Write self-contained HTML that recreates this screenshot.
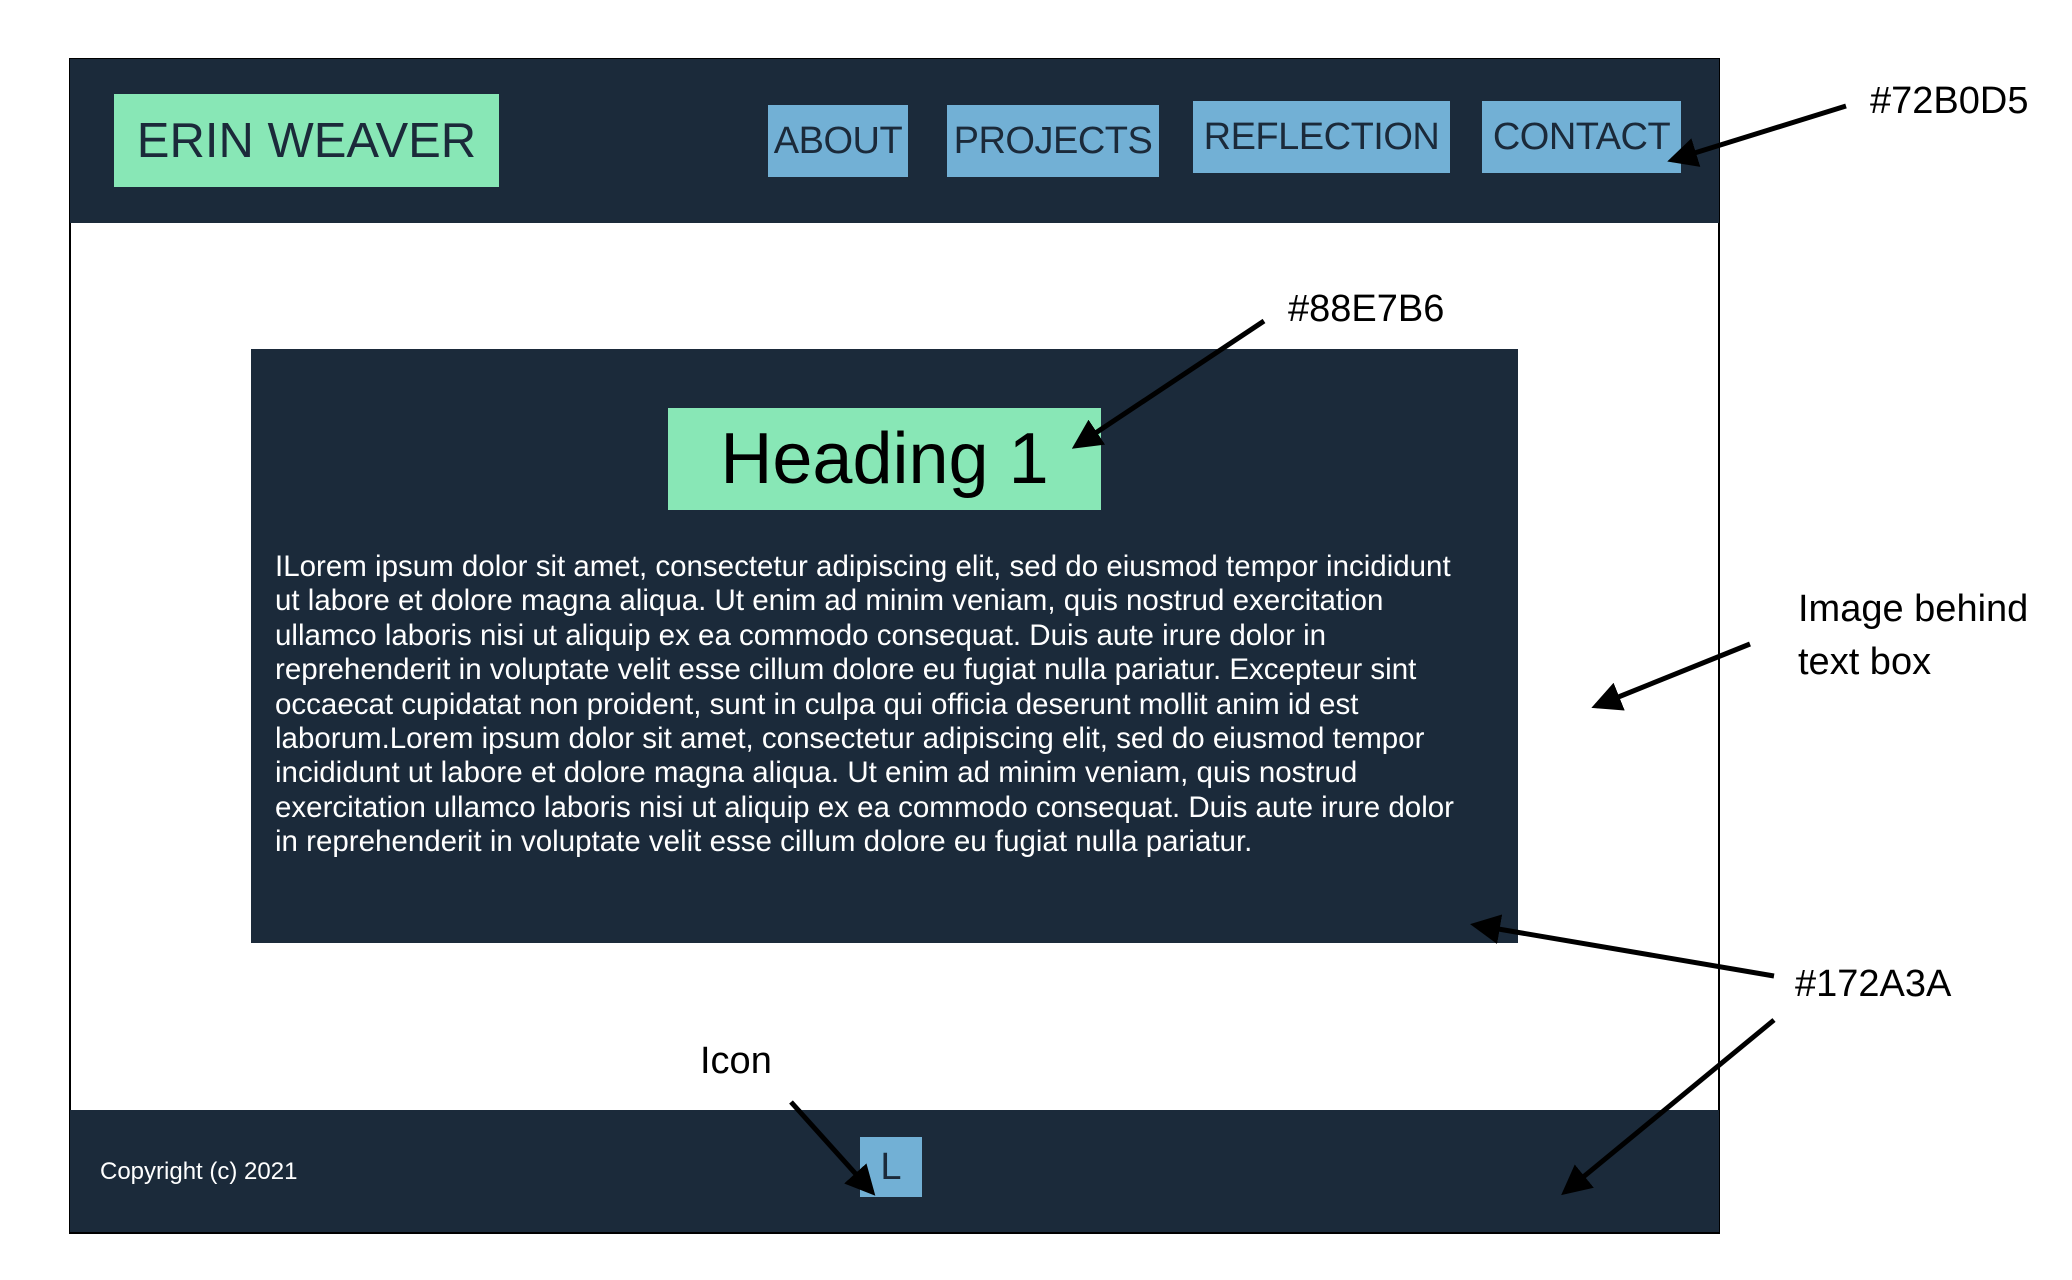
<!DOCTYPE html>
<html><head><meta charset="utf-8"><style>
body{margin:0;width:2072px;height:1280px;background:#fff;position:relative;overflow:hidden;font-family:"Liberation Sans",sans-serif}
.a{position:absolute}
.nav{position:absolute;background:#72b0d5;color:#1b2a3a;font-size:38px;letter-spacing:-0.5px;display:flex;align-items:center;justify-content:center;white-space:nowrap}
.p{position:absolute;left:275px;top:550px;color:#fff;font-size:29.5px;line-height:34.4px;white-space:nowrap}
.t{position:absolute;color:#000;font-size:38px;white-space:nowrap}
</style></head><body>
<div class="a" style="left:69px;top:58px;width:1651px;height:1176px;border:2px solid #000;box-sizing:border-box;background:#fff"></div>
<div class="a" style="left:70px;top:59px;width:1649px;height:164px;background:#1b2a3a"></div>
<div class="a" style="left:70px;top:1110px;width:1649px;height:122px;background:#1b2a3a"></div>
<div class="a" style="left:114px;top:94px;width:385px;height:93px;background:#88e7b6;color:#1b2a3a;font-size:49px;display:flex;align-items:center;justify-content:center;white-space:nowrap">ERIN WEAVER</div>
<div class="nav" style="left:768px;top:105px;width:140px;height:72px">ABOUT</div>
<div class="nav" style="left:947px;top:105px;width:212px;height:72px">PROJECTS</div>
<div class="nav" style="left:1193px;top:101px;width:257px;height:72px">REFLECTION</div>
<div class="nav" style="left:1482px;top:101px;width:199px;height:72px">CONTACT</div>
<div class="a" style="left:251px;top:349px;width:1267px;height:594px;background:#1b2a3a"></div>
<div class="a" style="left:668px;top:408px;width:433px;height:102px;background:#88e7b6;color:#000;font-size:72px;display:flex;align-items:center;justify-content:center;white-space:nowrap">Heading 1</div>
<div class="p">ILorem ipsum dolor sit amet, consectetur adipiscing elit, sed do eiusmod tempor incididunt<br>ut labore et dolore magna aliqua. Ut enim ad minim veniam, quis nostrud exercitation<br>ullamco laboris nisi ut aliquip ex ea commodo consequat. Duis aute irure dolor in<br>reprehenderit in voluptate velit esse cillum dolore eu fugiat nulla pariatur. Excepteur sint<br>occaecat cupidatat non proident, sunt in culpa qui officia deserunt mollit anim id est<br>laborum.Lorem ipsum dolor sit amet, consectetur adipiscing elit, sed do eiusmod tempor<br>incididunt ut labore et dolore magna aliqua. Ut enim ad minim veniam, quis nostrud<br>exercitation ullamco laboris nisi ut aliquip ex ea commodo consequat. Duis aute irure dolor<br>in reprehenderit in voluptate velit esse cillum dolore eu fugiat nulla pariatur.</div>
<div class="a" style="left:100px;top:1158px;color:#fff;font-size:24px;white-space:nowrap">Copyright (c) 2021</div>
<div class="a" style="left:860px;top:1137px;width:62px;height:60px;background:#72b0d5;color:#1b2a3a;font-size:38px;display:flex;align-items:center;justify-content:center">L</div>
<div class="t" style="left:1870px;top:80px">#72B0D5</div>
<div class="t" style="left:1288px;top:288px">#88E7B6</div>
<div class="t" style="left:1798px;top:588px">Image behind</div>
<div class="t" style="left:1798px;top:641px">text box</div>
<div class="t" style="left:1795px;top:963px">#172A3A</div>
<div class="t" style="left:700px;top:1040px">Icon</div>
<svg class="a" style="left:0;top:0" width="2072" height="1280">
<defs><marker id="m" markerWidth="6" markerHeight="6" refX="5" refY="3" orient="auto" markerUnits="strokeWidth"><path d="M0,0 L6,3 L0,6 z" fill="#000"/></marker></defs>
<g stroke="#000" stroke-width="5" marker-end="url(#m)">
<line x1="1846" y1="106" x2="1672" y2="160"/>
<line x1="1264" y1="321" x2="1076" y2="446"/>
<line x1="1750" y1="644" x2="1596" y2="706"/>
<line x1="1774" y1="976" x2="1475" y2="925"/>
<line x1="1774" y1="1020" x2="1565" y2="1192"/>
<line x1="791" y1="1102" x2="872" y2="1192"/>
</g></svg>
</body></html>
